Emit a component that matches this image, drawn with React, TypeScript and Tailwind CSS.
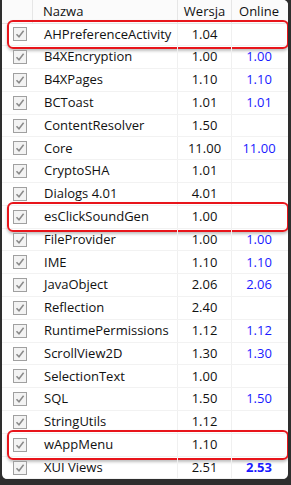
import React from 'react';

type Row = {
  name: string;
  version: string;
  online?: string;
  bold?: boolean;
  marked?: boolean;
};

const rows: Row[] = [
  { name: 'AHPreferenceActivity', version: '1.04', marked: true },
  { name: 'B4XEncryption', version: '1.00', online: '1.00' },
  { name: 'B4XPages', version: '1.10', online: '1.10' },
  { name: 'BCToast', version: '1.01', online: '1.01' },
  { name: 'ContentResolver', version: '1.50' },
  { name: 'Core', version: '11.00', online: '11.00' },
  { name: 'CryptoSHA', version: '1.01' },
  { name: 'Dialogs 4.01', version: '4.01' },
  { name: 'esClickSoundGen', version: '1.00', marked: true },
  { name: 'FileProvider', version: '1.00', online: '1.00' },
  { name: 'IME', version: '1.10', online: '1.10' },
  { name: 'JavaObject', version: '2.06', online: '2.06' },
  { name: 'Reflection', version: '2.40' },
  { name: 'RuntimePermissions', version: '1.12', online: '1.12' },
  { name: 'ScrollView2D', version: '1.30', online: '1.30' },
  { name: 'SelectionText', version: '1.00' },
  { name: 'SQL', version: '1.50', online: '1.50' },
  { name: 'StringUtils', version: '1.12' },
  { name: 'wAppMenu', version: '1.10', marked: true },
  { name: 'XUI Views', version: '2.51', online: '2.53', bold: true },
];

const CheckBox = () => (
  <div className="w-[14px] h-[14px] border border-[#a0a0a0] bg-[#f3f3f3] flex items-center justify-center">
    <svg width="10" height="10" viewBox="0 0 10 10">
      <path d="M1.5 5.2 L4 7.8 L8.6 1.8" fill="none" stroke="#8a8a8a" strokeWidth="1.5" />
    </svg>
  </div>
);

export default function App() {
  return (
    <div className="w-[291px] h-[485px] bg-[#2e2e2e] pl-[2px] pr-[3px] pb-[6px]" style={{ fontFamily: '"Open Sans", "Noto Sans", sans-serif' }}>
      <div className="relative w-full h-full bg-white rounded-tr-[5px] rounded-b-[5px] overflow-hidden text-[13px] text-[#111]">
        <div className="grid grid-cols-[31px_145px_54px_54px] h-[23.5px] bg-[#fbfbfb] border-b border-[#e6e6e6]">
          <div className="border-r border-[#e6e6e6]" />
          <div className="pl-[10px] flex items-center border-r border-[#e6e6e6]">Nazwa</div>
          <div className="flex items-center justify-center border-r border-[#e6e6e6]">Wersja</div>
          <div className="flex items-center justify-center">Online</div>
        </div>
        {rows.map((r) => (
          <div key={r.name} className="relative grid grid-cols-[31px_145px_54px_54px] h-[22.8px] border-b border-[#f2f2f2]">
            <div className="flex items-center justify-end pr-[6px]">
              <CheckBox />
            </div>
            <div className="pl-[11px] flex items-center border-r border-[#f0f0f0] overflow-hidden whitespace-nowrap">{r.name}</div>
            <div className="flex items-center justify-center border-r border-[#f0f0f0]">{r.version}</div>
            <div className={`flex items-center justify-center text-[#1a1aff] ${r.bold ? 'font-bold text-[#0a0af5]' : ''}`}>{r.online ?? ''}</div>
            {r.marked && (
              <div className="absolute left-[5px] right-[-1px] top-[-4px] bottom-[-4px] rounded-[6px] border-2 border-[#e8151b] shadow-[0_2px_3px_rgba(0,0,0,0.25)] pointer-events-none" />
            )}
          </div>
        ))}
      </div>
    </div>
  );
}
